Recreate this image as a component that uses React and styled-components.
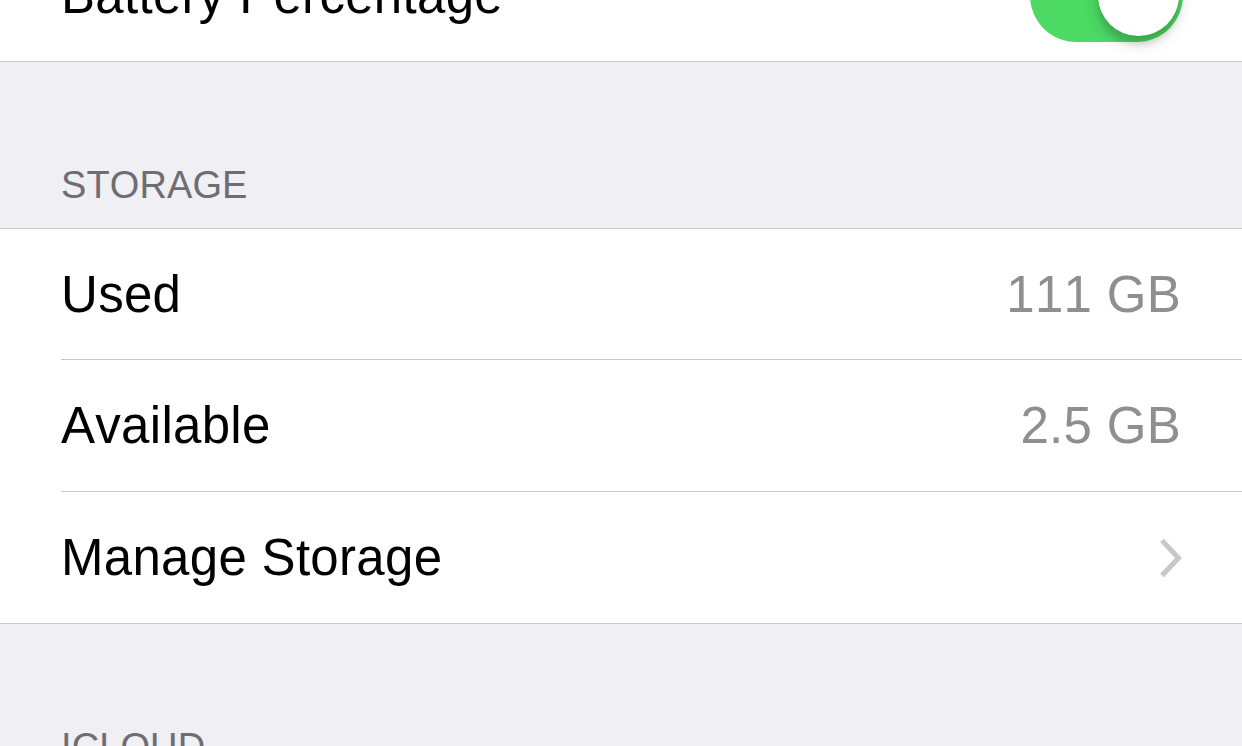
import React from "react";
import styled, { createGlobalStyle } from "styled-components";

const Global = createGlobalStyle`
  html, body { margin: 0; padding: 0; background: #efeff4; overflow: hidden; }
  body { font-family: "Liberation Sans", Arial, sans-serif; -webkit-font-smoothing: antialiased; font-kerning: none; }
`;

const Screen = styled.div`
  width: 1242px;
  height: 746px;
  overflow: hidden;
  background: #efeff4;
`;

const Scroller = styled.div`
  margin-top: -71px;
  display: flex;
  flex-direction: column;
`;

const Group = styled.div`
  background: #ffffff;
  border-top: ${(p) => (p.$noTop ? "none" : "1px solid #c8c7cc")};
  border-bottom: 1px solid #c8c7cc;
`;

const Cell = styled.div`
  padding-left: 61px;
`;

const CellInner = styled.div`
  height: ${(p) => p.$h || 130}px;
  display: flex;
  align-items: center;
  justify-content: space-between;
  padding-right: 61px;
  border-bottom: ${(p) => (p.$last ? "none" : "1px solid #c8c7cc")};
  box-sizing: content-box;
`;

const Label = styled.span`
  font-size: 51px;
  color: #000000;
  line-height: 1;
  letter-spacing: 0.3px;
  font-kerning: none;
`;

const Value = styled.span`
  font-size: 51px;
  color: #8e8e93;
  line-height: 1;
  letter-spacing: 0.3px;
  font-kerning: none;
`;

const SectionHeader = styled.div`
  height: 166px;
  box-sizing: border-box;
  display: flex;
  align-items: flex-end;
  padding: 0 61px 20px;
  font-size: 38px;
  line-height: 46px;
  color: #6d6d72;
  letter-spacing: 0.1px;
`;

const Switch = styled.div`
  position: relative;
  width: 153px;
  height: 93px;
  border-radius: 47px;
  background: #4cd964;
  margin-right: -2px;
  flex-shrink: 0;
`;

const Knob = styled.div`
  position: absolute;
  right: 4px;
  top: 6px;
  width: 81px;
  height: 81px;
  border-radius: 50%;
  background: #ffffff;
  box-shadow: 0 9px 6px rgba(0, 0, 0, 0.12), 0 6px 18px rgba(0, 0, 0, 0.14), 0 0 0 1px rgba(0, 0, 0, 0.03);
`;

const Chevron = () => (
  <svg width="26" height="42" viewBox="0 0 26 42" style={{ marginRight: -3 }}>
    <polyline points="4,3.5 20.5,21 4,38.5" fill="none" stroke="#c7c7cc" strokeWidth="5" strokeLinecap="butt" strokeLinejoin="miter" />
  </svg>
);

export default function App() {
  return (
    <Screen>
      <Global />
      <Scroller>
        <Group $noTop>
          <Cell>
            <CellInner $h={132} $last>
              <Label>Battery Percentage</Label>
              <Switch>
                <Knob />
              </Switch>
            </CellInner>
          </Cell>
        </Group>
        <SectionHeader>STORAGE</SectionHeader>
        <Group>
          <Cell>
            <CellInner>
              <Label>Used</Label>
              <Value>111 GB</Value>
            </CellInner>
          </Cell>
          <Cell>
            <CellInner $h={131}>
              <Label>Available</Label>
              <Value>2.5 GB</Value>
            </CellInner>
          </Cell>
          <Cell>
            <CellInner $h={131} $last>
              <Label>Manage Storage</Label>
              <Chevron />
            </CellInner>
          </Cell>
        </Group>
        <SectionHeader>ICLOUD</SectionHeader>
      </Scroller>
    </Screen>
  );
}
